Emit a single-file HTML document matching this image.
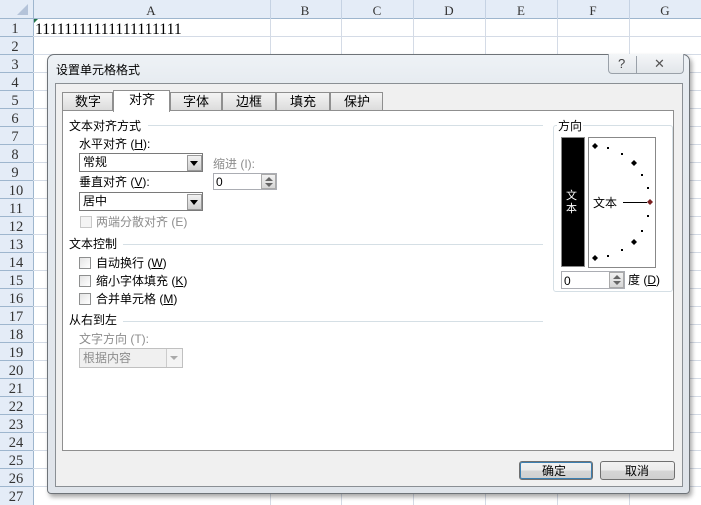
<!DOCTYPE html>
<html><head><meta charset="utf-8"><style>
*{margin:0;padding:0;box-sizing:border-box}
body{width:701px;height:505px;overflow:hidden;background:#fff;font-family:"Liberation Sans","Noto Sans CJK SC",sans-serif;font-size:12px;color:#000;position:relative}
.a{position:absolute}
.t{position:absolute;white-space:nowrap;line-height:14px}
.cb{position:absolute;width:12px;height:12px;border:1px solid #8e8f8f;background:linear-gradient(135deg,#e4e4e4,#fff)}
.g{color:#8d8d8d}
.sp{position:absolute;width:15px;height:15px;background:linear-gradient(#f2f2f2,#d6d6d6);border:1px solid #aaa}
.sp:before{content:"";position:absolute;left:3px;top:2px;border-left:4px solid transparent;border-right:4px solid transparent;border-bottom:4px solid #666}
.sp:after{content:"";position:absolute;left:3px;top:8px;border-left:4px solid transparent;border-right:4px solid transparent;border-top:4px solid #666}
</style></head><body>
<svg class="a" style="left:0;top:0" width="701" height="505">
<rect x="0" y="0" width="701" height="19" fill="#e4ecf7"/>
<rect x="0" y="0" width="33" height="505" fill="#e4ecf7"/>
<polygon points="28,4 28,15 17,15" fill="#b4c3d9"/>
<g stroke="#9eb6ce"><line x1="0" y1="18.5" x2="701" y2="18.5"/><line x1="33.5" y1="0" x2="33.5" y2="505"/></g>
<g stroke="#c5d2e3"><line x1="270.5" y1="0" x2="270.5" y2="19"/><line x1="341.5" y1="0" x2="341.5" y2="19"/><line x1="413.5" y1="0" x2="413.5" y2="19"/><line x1="485.5" y1="0" x2="485.5" y2="19"/><line x1="557.5" y1="0" x2="557.5" y2="19"/><line x1="629.5" y1="0" x2="629.5" y2="19"/></g>
<g stroke="#d4dbe6"><line x1="270.5" y1="19" x2="270.5" y2="505"/><line x1="341.5" y1="19" x2="341.5" y2="505"/><line x1="413.5" y1="19" x2="413.5" y2="505"/><line x1="485.5" y1="19" x2="485.5" y2="505"/><line x1="557.5" y1="19" x2="557.5" y2="505"/><line x1="629.5" y1="19" x2="629.5" y2="505"/>
<line x1="33" y1="36.5" x2="701" y2="36.5"/><line x1="33" y1="54.5" x2="701" y2="54.5"/><line x1="33" y1="72.5" x2="701" y2="72.5"/><line x1="33" y1="90.5" x2="701" y2="90.5"/><line x1="33" y1="108.5" x2="701" y2="108.5"/><line x1="33" y1="126.5" x2="701" y2="126.5"/><line x1="33" y1="144.5" x2="701" y2="144.5"/><line x1="33" y1="162.5" x2="701" y2="162.5"/><line x1="33" y1="180.5" x2="701" y2="180.5"/><line x1="33" y1="198.5" x2="701" y2="198.5"/><line x1="33" y1="216.5" x2="701" y2="216.5"/><line x1="33" y1="234.5" x2="701" y2="234.5"/><line x1="33" y1="252.5" x2="701" y2="252.5"/><line x1="33" y1="270.5" x2="701" y2="270.5"/><line x1="33" y1="288.5" x2="701" y2="288.5"/><line x1="33" y1="306.5" x2="701" y2="306.5"/><line x1="33" y1="324.5" x2="701" y2="324.5"/><line x1="33" y1="342.5" x2="701" y2="342.5"/><line x1="33" y1="360.5" x2="701" y2="360.5"/><line x1="33" y1="378.5" x2="701" y2="378.5"/><line x1="33" y1="396.5" x2="701" y2="396.5"/><line x1="33" y1="414.5" x2="701" y2="414.5"/><line x1="33" y1="432.5" x2="701" y2="432.5"/><line x1="33" y1="450.5" x2="701" y2="450.5"/><line x1="33" y1="468.5" x2="701" y2="468.5"/><line x1="33" y1="486.5" x2="701" y2="486.5"/></g>
<g stroke="#9eb6ce"><line x1="0" y1="36.5" x2="33" y2="36.5"/><line x1="0" y1="54.5" x2="33" y2="54.5"/><line x1="0" y1="72.5" x2="33" y2="72.5"/><line x1="0" y1="90.5" x2="33" y2="90.5"/><line x1="0" y1="108.5" x2="33" y2="108.5"/><line x1="0" y1="126.5" x2="33" y2="126.5"/><line x1="0" y1="144.5" x2="33" y2="144.5"/><line x1="0" y1="162.5" x2="33" y2="162.5"/><line x1="0" y1="180.5" x2="33" y2="180.5"/><line x1="0" y1="198.5" x2="33" y2="198.5"/><line x1="0" y1="216.5" x2="33" y2="216.5"/><line x1="0" y1="234.5" x2="33" y2="234.5"/><line x1="0" y1="252.5" x2="33" y2="252.5"/><line x1="0" y1="270.5" x2="33" y2="270.5"/><line x1="0" y1="288.5" x2="33" y2="288.5"/><line x1="0" y1="306.5" x2="33" y2="306.5"/><line x1="0" y1="324.5" x2="33" y2="324.5"/><line x1="0" y1="342.5" x2="33" y2="342.5"/><line x1="0" y1="360.5" x2="33" y2="360.5"/><line x1="0" y1="378.5" x2="33" y2="378.5"/><line x1="0" y1="396.5" x2="33" y2="396.5"/><line x1="0" y1="414.5" x2="33" y2="414.5"/><line x1="0" y1="432.5" x2="33" y2="432.5"/><line x1="0" y1="450.5" x2="33" y2="450.5"/><line x1="0" y1="468.5" x2="33" y2="468.5"/><line x1="0" y1="486.5" x2="33" y2="486.5"/></g>
<polygon points="34,19 38,19 34,23" fill="#207245"/>
<g font-family="Liberation Serif,serif" font-size="13" fill="#333" text-anchor="middle">
<text x="151" y="15">A</text><text x="305" y="15">B</text><text x="377" y="15">C</text><text x="449" y="15">D</text><text x="521" y="15">E</text><text x="593" y="15">F</text><text x="665" y="15">G</text>
</g>
<g font-family="Liberation Serif,serif" font-size="14.5" fill="#333" text-anchor="middle">
<text x="15" y="33">1</text><text x="15" y="51">2</text><text x="15" y="69">3</text><text x="15" y="87">4</text><text x="15" y="105">5</text><text x="15" y="123">6</text><text x="15" y="141">7</text><text x="15" y="159">8</text><text x="15" y="177">9</text><text x="16" y="195">10</text><text x="16" y="213">11</text><text x="16" y="231">12</text><text x="16" y="249">13</text><text x="16" y="267">14</text><text x="16" y="285">15</text><text x="16" y="303">16</text><text x="16" y="321">17</text><text x="16" y="339">18</text><text x="16" y="357">19</text><text x="16" y="375">20</text><text x="16" y="393">21</text><text x="16" y="411">22</text><text x="16" y="429">23</text><text x="16" y="447">24</text><text x="16" y="465">25</text><text x="16" y="483">26</text><text x="16" y="501">27</text>
</g>
<text x="35" y="34" font-family="Liberation Serif,serif" font-size="15.8">11111111111111111111</text>
</svg>

<div class="a" style="left:47px;top:54px;width:643px;height:440px;background:linear-gradient(#eef2f6,#e6ebf0 30px,#dfe4ea);border:1px solid #6e7378;border-radius:7px 7px 4px 4px;box-shadow:2px 3px 5px rgba(0,0,0,.35)"></div>
<div class="t" style="left:56px;top:63px;font-size:12px">设置单元格格式</div>
<div class="a" style="left:608px;top:54px;width:76px;height:20px;border:1px solid #9aa1a9;border-top:none;border-radius:0 0 4px 4px;background:linear-gradient(#f4f6f8,#e2e6ea)"></div>
<div class="a" style="left:636px;top:56px;width:1px;height:17px;background:#9aa1a9"></div>
<div class="t" style="left:618px;top:57px;font-size:13px;color:#444">?</div>
<div class="t" style="left:654px;top:57px;font-size:13px;color:#555">✕</div>
<div class="a" style="left:55px;top:83px;width:628px;height:404px;background:#f0f0f0;border:1px solid #8a8f94"></div>
<div class="a" style="left:62px;top:92px;width:51px;height:19px;border:1px solid #8f8f8f;background:linear-gradient(#f4f4f4,#dcdcdc)"></div>
<div class="a" style="left:170px;top:92px;width:52px;height:19px;border:1px solid #8f8f8f;background:linear-gradient(#f4f4f4,#dcdcdc)"></div>
<div class="a" style="left:222px;top:92px;width:54px;height:19px;border:1px solid #8f8f8f;background:linear-gradient(#f4f4f4,#dcdcdc)"></div>
<div class="a" style="left:276px;top:92px;width:54px;height:19px;border:1px solid #8f8f8f;background:linear-gradient(#f4f4f4,#dcdcdc)"></div>
<div class="a" style="left:330px;top:92px;width:53px;height:19px;border:1px solid #8f8f8f;background:linear-gradient(#f4f4f4,#dcdcdc)"></div>
<div class="a" style="left:62px;top:110px;width:612px;height:341px;background:#fff;border:1px solid #8f8f8f"></div>
<div class="a" style="left:113px;top:90px;width:57px;height:22px;border:1px solid #8f8f8f;border-bottom:none;background:#fff"></div>
<div class="t" style="left:75px;top:95px;font-size:13px">数字</div>
<div class="t" style="left:129px;top:93px;font-size:13px">对齐</div>
<div class="t" style="left:183px;top:95px;font-size:13px">字体</div>
<div class="t" style="left:236px;top:95px;font-size:13px">边框</div>
<div class="t" style="left:290px;top:95px;font-size:13px">填充</div>
<div class="t" style="left:344px;top:95px;font-size:13px">保护</div>
<div class="t" style="left:69px;top:119px">文本对齐方式</div>
<div class="a" style="left:148px;top:125px;width:395px;height:1px;background:#d5dfe5"></div>
<div class="t" style="left:79px;top:137px">水平对齐 (<u>H</u>):</div>
<div class="a" style="left:79px;top:153px;width:124px;height:19px;border:1px solid #7a7a7a;background:#fff"></div>
<div class="t" style="left:83px;top:155px">常规</div>
<div class="a" style="left:187px;top:155px;width:15px;height:16px;background:linear-gradient(#f2f2f2,#cfcfcf);border:1px solid #999"></div>
<div class="a" style="left:190px;top:161px;border-left:4px solid transparent;border-right:4px solid transparent;border-top:5px solid #000"></div>
<div class="t g" style="left:213px;top:157px">缩进 (I):</div>
<div class="a" style="left:213px;top:173px;width:64px;height:17px;border:1px solid #abadb3;background:#fff"></div>
<div class="t" style="left:216px;top:175px">0</div>
<div class="sp" style="left:261px;top:174px"></div>
<div class="t" style="left:79px;top:175px">垂直对齐 (<u>V</u>):</div>
<div class="a" style="left:79px;top:192px;width:124px;height:19px;border:1px solid #7a7a7a;background:#fff"></div>
<div class="t" style="left:83px;top:194px">居中</div>
<div class="a" style="left:187px;top:194px;width:15px;height:16px;background:linear-gradient(#f2f2f2,#cfcfcf);border:1px solid #999"></div>
<div class="a" style="left:190px;top:200px;border-left:4px solid transparent;border-right:4px solid transparent;border-top:5px solid #000"></div>
<div class="cb" style="left:80px;top:216px;border-color:#c8c8c8;background:#f4f4f4"></div>
<div class="t g" style="left:96px;top:215px">两端分散对齐 (E)</div>
<div class="t" style="left:69px;top:237px">文本控制</div>
<div class="a" style="left:123px;top:244px;width:420px;height:1px;background:#d5dfe5"></div>
<div class="cb" style="left:79px;top:257px"></div><div class="t" style="left:96px;top:256px">自动换行 (<u>W</u>)</div>
<div class="cb" style="left:79px;top:275px"></div><div class="t" style="left:96px;top:274px">缩小字体填充 (<u>K</u>)</div>
<div class="cb" style="left:79px;top:293px"></div><div class="t" style="left:96px;top:292px">合并单元格 (<u>M</u>)</div>
<div class="t" style="left:69px;top:313px">从右到左</div>
<div class="a" style="left:123px;top:321px;width:420px;height:1px;background:#d5dfe5"></div>
<div class="t g" style="left:79px;top:332px">文字方向 (T):</div>
<div class="a" style="left:79px;top:348px;width:104px;height:20px;border:1px solid #c0c0c0;background:#f0f0f0"></div>
<div class="t g" style="left:83px;top:351px">根据内容</div>
<div class="a" style="left:166px;top:349px;width:16px;height:18px;border-left:1px solid #ccc;background:#f4f4f4"></div>
<div class="a" style="left:170px;top:356px;border-left:4px solid transparent;border-right:4px solid transparent;border-top:4px solid #aaa"></div>
<div class="a" style="left:553px;top:125px;width:120px;height:167px;border:1px solid #d5dfe5;border-radius:3px"></div>
<div class="t" style="left:557px;top:119px;background:#fff;padding:0 1px">方向</div>
<div class="a" style="left:561px;top:137px;width:24px;height:130px;background:#000;border:1px solid #888"></div>
<div class="t" style="left:566px;top:190px;color:#fff;line-height:13px;font-size:11px;width:12px;white-space:normal">文本</div>
<div class="a" style="left:588px;top:137px;width:68px;height:131px;border:1px solid #888;background:#fff"></div>
<svg class="a" style="left:588px;top:137px" width="68" height="131">
<g fill="#000"><polygon points="7,6 10,9 7,12 4,9"/><polygon points="46,23 49,26 46,29 43,26"/><polygon points="46,102 49,105 46,108 43,105"/><polygon points="7,118 10,121 7,124 4,121"/>
<rect x="19" y="10" width="2" height="2"/><rect x="33" y="16" width="2" height="2"/><rect x="53" y="37" width="2" height="2"/><rect x="59" y="50" width="2" height="2"/><rect x="59" y="78" width="2" height="2"/><rect x="53" y="93" width="2" height="2"/><rect x="33" y="112" width="2" height="2"/><rect x="19" y="118" width="2" height="2"/></g>
<line x1="35" y1="65.5" x2="59" y2="65.5" stroke="#000"/>
<polygon points="62,62 65,65 62,68 59,65" fill="#7a2020"/>
<text x="5" y="70" font-size="12" font-family="Noto Sans CJK SC,sans-serif">文本</text>
</svg>
<div class="a" style="left:561px;top:271px;width:64px;height:18px;border:1px solid #abadb3;background:#fff"></div>
<div class="t" style="left:564px;top:274px">0</div>
<div class="sp" style="left:609px;top:272px;height:16px"></div>
<div class="t" style="left:628px;top:273px">度 (<u>D</u>)</div>
<div class="a" style="left:519px;top:461px;width:74px;height:19px;border:1px solid #707070;border-radius:3px;background:linear-gradient(#f2f2f2,#ebebeb 50%,#d6d6d6 50%,#cfcfcf);box-shadow:inset 0 0 0 1px #3c7fb1"></div>
<div class="t" style="left:542px;top:464px">确定</div>
<div class="a" style="left:600px;top:461px;width:75px;height:19px;border:1px solid #707070;border-radius:3px;background:linear-gradient(#f2f2f2,#ebebeb 50%,#d6d6d6 50%,#cfcfcf)"></div>
<div class="t" style="left:625px;top:464px">取消</div>
</body></html>
